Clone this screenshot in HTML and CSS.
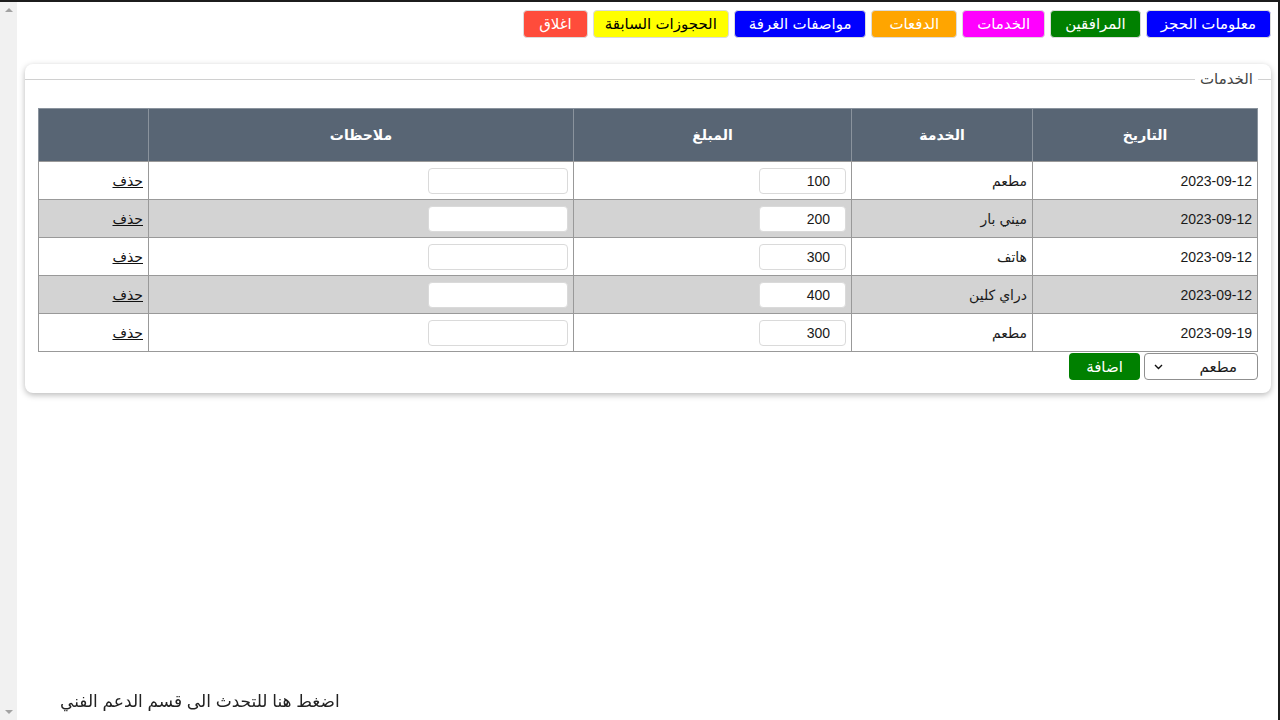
FILE: index.html
```html
<!DOCTYPE html>
<html lang="ar" dir="rtl">
  <head>
    <meta charset="UTF-8">
    <meta name="viewport" content="width=device-width, initial-scale=1.0">
    <title>الخدمات</title>
    <link rel="stylesheet" href="styles.css">
  </head>
  <body>

    <main class="page">
      <nav class="topNav">
        <button class="navButton blueBtn">معلومات الحجز</button>
        <button class="navButton greenBtn">المرافقين</button>
        <button class="navButton pinkBtn">الخدمات</button>
        <button class="navButton orangeBtn">الدفعات</button>
        <button class="navButton blueBtn">مواصفات الغرفة</button>
        <button class="navButton yellowBtn">الحجوزات السابقة</button>
        <button class="navButton redBtn">اغلاق</button>
      </nav>

      <section class="card">
        <fieldset class="servicesBox">
          <legend>الخدمات</legend>

          <table class="servicesTable">
            <thead>
              <tr>
                <th class="colDate">التاريخ</th>
                <th class="colService">الخدمة</th>
                <th class="colAmount">المبلغ</th>
                <th class="colNotes">ملاحظات</th>
                <th class="colDelete"></th>
              </tr>
            </thead>
            <tbody class="js-rows"></tbody>
          </table>

          <div class="addRow">
            <div class="selectBox">
              <span>مطعم</span>
              <svg class="chevron" width="9" height="6" viewBox="0 0 9 6"><path d="M1 1l3.5 3.5L8 1" fill="none" stroke="#111" stroke-width="1.4"/></svg>
            </div>
            <button class="addButton">اضافة</button>
          </div>
        </fieldset>
      </section>
    </main>

    <div class="fakeScrollbar">
      <span class="arrowUp"></span>
      <span class="arrowDown"></span>
    </div>

    <a class="supportLink">اضغط هنا للتحدث الى قسم الدعم الفني</a>

    <script>
      const services = [
        { date: '2023-09-12', name: 'مطعم', amount: 100 },
        { date: '2023-09-12', name: 'ميني بار', amount: 200 },
        { date: '2023-09-12', name: 'هاتف', amount: 300 },
        { date: '2023-09-12', name: 'دراي كلين', amount: 400 },
        { date: '2023-09-19', name: 'مطعم', amount: 300 }
      ];

      let rowsHTML = '';
      services.forEach((item, i) => {
        rowsHTML += `
          <tr class="${i % 2 === 1 ? 'grayRow' : ''}">
            <td>${item.date}</td>
            <td>${item.name}</td>
            <td><input class="amountInput" value="${item.amount}"></td>
            <td><input class="notesInput"></td>
            <td><a class="deleteLink">حذف</a></td>
          </tr>`;
      });

      document.querySelector('.js-rows').innerHTML = rowsHTML;
    </script>
  </body>
</html>
```

FILE: styles.css
```css
html {
  height: 100%;
}

body {
  margin: 0;
  height: 720px;
  box-sizing: border-box;
  border-top: 2px solid #1c1c1c;
  border-right: 2px solid #1c1c1c;
  display: flex;
  font-family: "Segoe UI", "Liberation Sans", "DejaVu Sans", sans-serif;
  font-size: 14px;
  color: #1a1a1a;
  background-color: white;
  overflow: hidden;
}

.page {
  flex: 1;
  padding: 8px 7px 8px 8px;
}

.fakeScrollbar {
  width: 17px;
  background-color: #f1f1f1;
  display: flex;
  flex-direction: column;
  justify-content: space-between;
  align-items: center;
  padding: 6px 0;
}

.arrowUp,
.arrowDown {
  width: 0;
  height: 0;
  border-left: 4px solid transparent;
  border-right: 4px solid transparent;
}

.arrowUp {
  border-bottom: 4px solid #a3a3a3;
}

.arrowDown {
  border-top: 4px solid #a3a3a3;
}

.topNav {
  display: flex;
  gap: 5px;
}

.navButton {
  height: 28px;
  padding: 0 14px;
  font-family: inherit;
  font-size: 15px;
  color: white;
  border: 1px solid #dcdcdc;
  border-radius: 4px;
  cursor: pointer;
}

.blueBtn {
  background-color: #0000ff;
}

.greenBtn {
  background-color: #008000;
}

.pinkBtn {
  background-color: #ff00ff;
}

.orangeBtn {
  background-color: #ffa500;
  padding: 0 17px;
}

.yellowBtn {
  background-color: #ffff00;
  color: black;
  padding: 0 11px;
}

.redBtn {
  background-color: #ff4c3b;
  padding: 0 15px;
}

.card {
  margin-top: 26px;
  background-color: white;
  border-radius: 8px;
  box-shadow: 0 2px 6px rgba(0, 0, 0, 0.28);
  padding: 6px 0 13px;
}

.servicesBox {
  margin: 0;
  border: none;
  border-top: 1px solid #d0d0d0;
  padding: 0 13px 0 13px;
}

.servicesBox legend {
  padding: 0 5px;
  font-size: 15px;
  color: #444;
}

.servicesTable {
  width: 100%;
  margin-top: 20px;
  border-collapse: collapse;
  border: 1px solid #999;
}

.servicesTable th {
  height: 50px;
  background-color: #586574;
  color: white;
  font-weight: bold;
  border: 1px solid #8a939d;
  border-bottom-color: #999;
}

.servicesTable td {
  height: 37px;
  padding: 0 5px;
  text-align: right;
  border: 1px solid #999;
}

.grayRow td {
  background-color: #d3d3d3;
}

.colDate {
  width: 222px;
}

.colService {
  width: 178px;
}

.colAmount {
  width: 275px;
}

.colDelete {
  width: 107px;
}

.amountInput,
.notesInput {
  height: 26px;
  box-sizing: border-box;
  border: 1px solid #dadada;
  border-radius: 4px;
  background-color: white;
  font-family: inherit;
  font-size: 14px;
  color: #1a1a1a;
  vertical-align: middle;
}

.amountInput {
  width: 87px;
  padding: 0 15px 0 4px;
}

.notesInput {
  width: 140px;
}

.deleteLink {
  color: #111;
  text-decoration: underline;
  cursor: pointer;
}

.addRow {
  display: flex;
  gap: 4px;
  margin-top: 1px;
}

.selectBox {
  width: 114px;
  height: 27px;
  box-sizing: border-box;
  border: 1px solid #8f8f8f;
  border-radius: 4px;
  display: flex;
  align-items: center;
  justify-content: space-between;
  padding: 0 20px 0 9px;
  font-size: 15px;
}

.addButton {
  width: 71px;
  height: 27px;
  background-color: #008000;
  color: white;
  border: none;
  border-radius: 4px;
  font-family: inherit;
  font-size: 15px;
  cursor: pointer;
}

.supportLink {
  position: fixed;
  left: 60px;
  bottom: 8px;
  font-size: 17px;
  color: #222;
  cursor: pointer;
}
```
